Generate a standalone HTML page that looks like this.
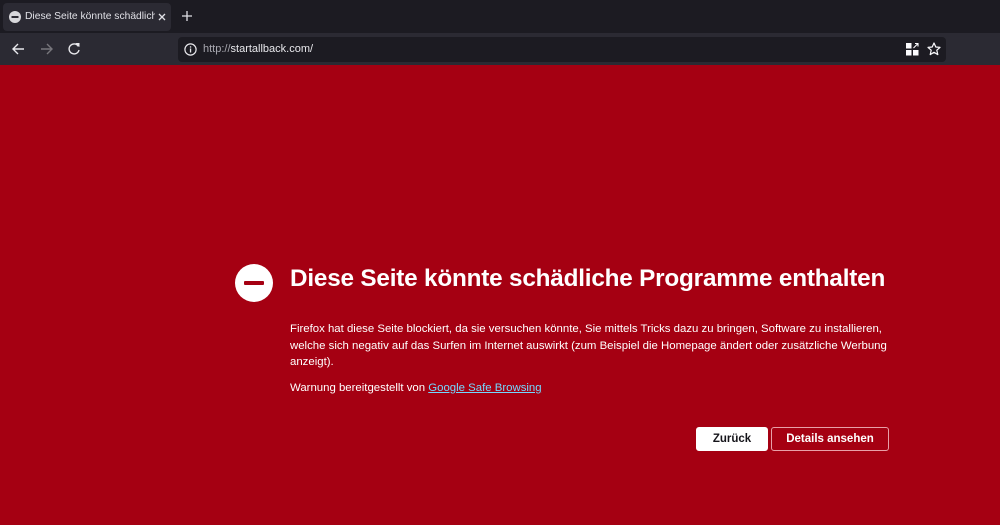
<!DOCTYPE html>
<html><head><meta charset="utf-8"><style>
*{margin:0;padding:0;box-sizing:border-box}
body{width:1000px;height:525px;overflow:hidden;background:#a50012;font-family:"Liberation Sans",sans-serif;position:relative}
.tabbar{position:absolute;left:0;top:0;width:1000px;height:33px;background:#1c1b22}
.tab{position:absolute;left:3px;top:3px;width:168px;height:28px;background:#2b2a33;border-radius:4px;color:#e0e0e6;font-size:10.3px}
.toolbar{position:absolute;left:0;top:33px;width:1000px;height:32px;background:#2b2a33}
.url{position:absolute;left:178px;top:4px;width:768px;height:25px;background:#1c1b22;border-radius:4px}
.abs{position:absolute}
h1{position:absolute;left:290px;top:265px;font-size:24.3px;font-weight:bold;color:#fff;white-space:nowrap;letter-spacing:-0.2px}
.p{position:absolute;left:290px;color:#fff;font-size:11.4px;line-height:16.5px;white-space:nowrap}
a{color:#74d8ff;text-decoration:underline}
.btn{position:absolute;top:427px;height:24px;border-radius:3px;font-size:11.5px;font-weight:bold;text-align:center;line-height:22px}
</style></head><body>
<div class="tabbar">
 <div class="tab">
  <svg class="abs" style="left:6px;top:8px" width="12" height="12"><circle cx="6" cy="6" r="6" fill="#d8d8dc"/><rect x="2.5" y="5" width="7" height="2" fill="#2b2a33"/></svg>
  <span class="abs" style="left:22px;top:8px;white-space:nowrap;width:130px;overflow:hidden">Diese Seite könnte schädliche P</span>
  <svg class="abs" style="left:155px;top:10px" width="8" height="8"><path d="M1 1L7 7M7 1L1 7" stroke="#e0e0e6" stroke-width="1.3"/></svg>
 </div>
 <svg class="abs" style="left:182px;top:11px" width="10" height="10"><path d="M5 0V10M0 5H10" stroke="#e0e0e6" stroke-width="1.3"/></svg>
</div>
<div class="toolbar">
 <svg class="abs" style="left:12px;top:10px" width="13" height="12"><path d="M12 6H1.5M6 1L1 6L6 11" stroke="#e8e8ec" stroke-width="1.4" fill="none"/></svg>
 <svg class="abs" style="left:40px;top:10px" width="13" height="12"><path d="M1 6H11.5M7 1L12 6L7 11" stroke="#77767c" stroke-width="1.4" fill="none"/></svg>
 <svg class="abs" style="left:67px;top:9px" width="14" height="14"><path d="M11.5 4.5A5 5 0 1 0 12 8" stroke="#e8e8ec" stroke-width="1.4" fill="none"/><path d="M8.5 1H12.5V5Z" fill="#e8e8ec"/></svg>
 <div class="url">
  <svg class="abs" style="left:6px;top:6px" width="13" height="13"><circle cx="6.5" cy="6.5" r="5.6" stroke="#e8e8ec" stroke-width="1.2" fill="none"/><rect x="5.9" y="5.5" width="1.3" height="4" fill="#e8e8ec"/><rect x="5.9" y="3.3" width="1.3" height="1.3" fill="#e8e8ec"/></svg>
  <span class="abs" style="left:25px;top:6px;font-size:11px;color:#e8e8ec;white-space:nowrap"><span style="color:#a8a8b0">http://</span>startallback.com/</span>
  <svg class="abs" style="left:728px;top:6px" width="13" height="13"><rect x="0" y="0" width="5.5" height="5.5" fill="#fbfbfe"/><rect x="0" y="7" width="5.5" height="5.5" fill="#fbfbfe"/><rect x="7" y="7" width="5.5" height="5.5" fill="#fbfbfe"/><path d="M7.5 5L12 0.5M9 0.5H12V3.5" stroke="#fbfbfe" stroke-width="1.1" fill="none"/></svg>
  <svg class="abs" style="left:749px;top:5px" width="14" height="14"><path d="M7 1L8.8 5L13 5.4L9.8 8.2L10.8 12.6L7 10.3L3.2 12.6L4.2 8.2L1 5.4L5.2 5Z" stroke="#fbfbfe" stroke-width="1.2" fill="none" stroke-linejoin="round"/></svg>
 </div>
</div>
<svg class="abs" style="left:235px;top:264px" width="38" height="38"><circle cx="19" cy="19" r="19" fill="#fff"/><rect x="9" y="17" width="20" height="4" rx="1" fill="#a50012"/></svg>
<h1>Diese Seite könnte schädliche Programme enthalten</h1>
<div class="p" style="top:321px">Firefox hat diese Seite blockiert, da sie versuchen könnte, Sie mittels Tricks dazu zu bringen, Software zu installieren,<br>welche sich negativ auf das Surfen im Internet auswirkt (zum Beispiel die Homepage ändert oder zusätzliche Werbung<br>anzeigt).</div>
<div class="p" style="top:380px">Warnung bereitgestellt von <a>Google Safe Browsing</a></div>
<div class="btn" style="left:696px;width:72px;background:#fff;color:#15141a;border:1px solid #fff">Zurück</div>
<div class="btn" style="left:771px;width:118px;color:#fff;border:1px solid #e8a0a8">Details ansehen</div>
</body></html>
